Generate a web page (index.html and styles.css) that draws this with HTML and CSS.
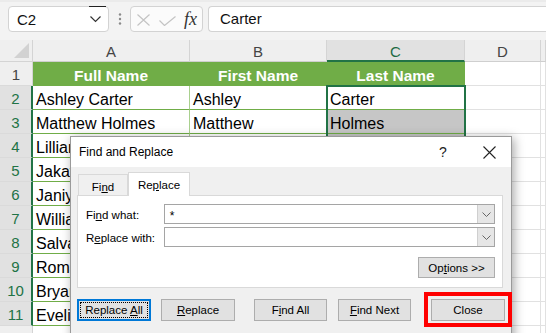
FILE: index.html
```html
<!DOCTYPE html>
<html>
<head>
<meta charset="utf-8">
<link rel="stylesheet" href="styles.css">
</head>
<body>
<div class="app">
  <div class="fbar">
    <div class="namebox"><span>C2</span><svg width="11" height="7" viewBox="0 0 11 7"><polyline points="0.5,0.5 5.5,5.5 10.5,0.5" fill="none" stroke="#333" stroke-width="1.2"/></svg></div>
    <div class="dots"><svg width="4" height="12" viewBox="0 0 4 12"><circle cx="2" cy="1.5" r="1.2" fill="#8a8a8a"/><circle cx="2" cy="6" r="1.2" fill="#8a8a8a"/><circle cx="2" cy="10.5" r="1.2" fill="#8a8a8a"/></svg></div>
    <div class="fxbox">
      <svg class="ic-x" width="13" height="12" viewBox="0 0 13 12"><path d="M0.5 0.5 L12.5 11.5 M12.5 0.5 L0.5 11.5" stroke="#c4c4c4" stroke-width="1.2" fill="none"/></svg>
      <svg class="ic-ok" width="17" height="10" viewBox="0 0 17 10"><polyline points="0.5,4.5 5.5,9.5 16.5,0.5" fill="none" stroke="#c4c4c4" stroke-width="1.2"/></svg>
      <span class="fx">fx</span>
    </div>
    <div class="finput">Carter</div>
  </div>

  <div class="sheet">
    <div class="corner"><span class="tri"></span></div>
    <div class="ch">A</div><div class="ch">B</div><div class="ch hl">C</div><div class="ch">D</div><div class="ch"></div>

    <div class="rh">1</div><div class="c th">Full Name</div><div class="c th">First Name</div><div class="c th">Last Name</div><div class="c"></div><div class="c"></div>
    <div class="rh on">2</div><div class="c tc">Ashley Carter</div><div class="c tc">Ashley</div><div class="c tc">Carter</div><div class="c"></div><div class="c"></div>
    <div class="rh on">3</div><div class="c tc">Matthew Holmes</div><div class="c tc">Matthew</div><div class="c tc sel">Holmes</div><div class="c"></div><div class="c"></div>
    <div class="rh on">4</div><div class="c tc">Lillian Moore</div><div class="c tc">Lillian</div><div class="c tc sel">Moore</div><div class="c"></div><div class="c"></div>
    <div class="rh on">5</div><div class="c tc">Jakayla Reed</div><div class="c tc">Jakayla</div><div class="c tc sel">Reed</div><div class="c"></div><div class="c"></div>
    <div class="rh on">6</div><div class="c tc">Janiyah Hunt</div><div class="c tc">Janiyah</div><div class="c tc sel">Hunt</div><div class="c"></div><div class="c"></div>
    <div class="rh on">7</div><div class="c tc">William Fox</div><div class="c tc">William</div><div class="c tc sel">Fox</div><div class="c"></div><div class="c"></div>
    <div class="rh on">8</div><div class="c tc">Salvador Diaz</div><div class="c tc">Salvador</div><div class="c tc sel">Diaz</div><div class="c"></div><div class="c"></div>
    <div class="rh on">9</div><div class="c tc">Roman Hayes</div><div class="c tc">Roman</div><div class="c tc sel">Hayes</div><div class="c"></div><div class="c"></div>
    <div class="rh on">10</div><div class="c tc">Bryan Ortiz</div><div class="c tc">Bryan</div><div class="c tc sel">Ortiz</div><div class="c"></div><div class="c"></div>
    <div class="rh on">11</div><div class="c tc">Evelin Ross</div><div class="c tc">Evelin</div><div class="c tc sel">Ross</div><div class="c"></div><div class="c"></div>
    <div class="rh"></div><div class="c"></div><div class="c"></div><div class="c"></div><div class="c"></div><div class="c"></div>
  </div>

  <div class="selbox"></div>

  <div class="dialog">
    <div class="titlebar">
      <span class="title">Find and Replace</span>
      <span class="help">?</span>
      <span class="close"><svg width="13" height="13" viewBox="0 0 13 13"><path d="M0.5 0.5 L12.5 12.5 M12.5 0.5 L0.5 12.5" stroke="#222" stroke-width="1.1" fill="none"/></svg></span>
    </div>
    <div class="dbody">
      <div class="tabs">
        <div class="tab">Fi<u>n</u>d</div>
        <div class="tab active">Re<u>p</u>lace</div>
      </div>
      <div class="panel">
        <div class="frow">
          <span class="lbl">Fi<u>n</u>d what:</span>
          <div class="combo"><span class="val">*</span><span class="drop"><svg width="9" height="5" viewBox="0 0 9 5"><polyline points="0.5,0.5 4.5,4.5 8.5,0.5" fill="none" stroke="#666" stroke-width="1"/></svg></span></div>
        </div>
        <div class="frow">
          <span class="lbl">R<u>e</u>place with:</span>
          <div class="combo"><span class="val"></span><span class="drop"><svg width="9" height="5" viewBox="0 0 9 5"><polyline points="0.5,0.5 4.5,4.5 8.5,0.5" fill="none" stroke="#666" stroke-width="1"/></svg></span></div>
        </div>
        <div class="optrow"><button class="btn opt">Op<u>t</u>ions &gt;&gt;</button></div>
      </div>
      <div class="btnrow">
        <button class="btn b-all"><span class="focus">Replace <u>A</u>ll</span></button>
        <button class="btn b-rep"><u>R</u>eplace</button>
        <button class="btn b-fall">F<u>i</u>nd All</button>
        <button class="btn b-fnext"><u>F</u>ind Next</button>
        <button class="btn b-close">Close</button>
      </div>
    </div>
  </div>

  <div class="redbox"></div>
</div>
</body>
</html>
```
FILE: styles.css
```css
html, body {
  margin: 0;
  padding: 0;
}
body {
  width: 546px;
  height: 333px;
  overflow: hidden;
  background: #fff;
  font-family: "Liberation Sans", Arial, sans-serif;
}
.app {
  position: relative;
  width: 546px;
  height: 333px;
  overflow: hidden;
}

/* formula bar */
.fbar {
  height: 40px;
  box-sizing: border-box;
  padding-top: 4px;
  background: #f3f3f3;
  border-top: 2px solid #ebebeb;
  display: flex;
  align-items: flex-start;
}
.namebox {
  margin-left: 8px;
  width: 101px;
  height: 26px;
  box-sizing: border-box;
  border: 1px solid #d3d3d3;
  border-radius: 4px;
  background: #fff;
  display: flex;
  align-items: center;
  justify-content: space-between;
  padding: 0 7px 0 8px;
  font-size: 15px;
  color: #111;
  position: relative;
}
.namebox::after {
  content: "";
  position: absolute;
  top: -1px;
  right: 2px;
  width: 17px;
  height: 1px;
  background: #222;
}
.dots {
  width: 21px;
  height: 26px;
  display: flex;
  align-items: center;
  justify-content: center;
}
.fxbox {
  width: 73px;
  height: 26px;
  box-sizing: border-box;
  border: 1px solid #d3d3d3;
  border-radius: 4px;
  background: #fbfbfb;
  display: flex;
  align-items: center;
  padding-left: 6px;
}
.ic-x { margin-top: 2px; }
.ic-ok { margin-left: 9px; margin-top: 3px; }
.fx {
  margin-left: 8px;
  font-family: "Liberation Serif", "Times New Roman", serif;
  font-style: italic;
  font-size: 18px;
  color: #333;
  line-height: 1;
}
.finput {
  margin-left: 5px;
  flex: 1;
  height: 26px;
  box-sizing: border-box;
  border: 1px solid #d3d3d3;
  border-right: none;
  border-radius: 4px 0 0 4px;
  background: #fff;
  padding-left: 11px;
  font-size: 15px;
  line-height: 24px;
  color: #111;
}

/* sheet */
.sheet {
  display: grid;
  grid-template-columns: 33px 157px 137px 138px 76px 5px;
  grid-template-rows: 22px repeat(11, 24px) 10px;
  font-size: 16px;
}
.corner {
  background: #efefef;
  border-right: 1px solid #d4d4d4;
  border-bottom: 1px solid #d4d4d4;
  position: relative;
}
.tri {
  position: absolute;
  right: 3px;
  bottom: 3px;
  width: 0;
  height: 0;
  border-left: 15px solid transparent;
  border-bottom: 15px solid #d2d2d2;
}
.ch {
  background: #efefef;
  border-right: 1px solid #d4d4d4;
  border-bottom: 1px solid #cfcfcf;
  color: #444;
  font-size: 15px;
  display: flex;
  align-items: center;
  justify-content: center;
  padding-top: 2px;
  box-sizing: border-box;
}
.ch.hl {
  background: #e1e1e1;
  color: #1e6b43;
  border-bottom: 2px solid #217346;
}
.rh {
  background: #efefef;
  border-right: 1px solid #d4d4d4;
  border-bottom: 1px solid #dadada;
  color: #444;
  font-size: 15px;
  display: flex;
  align-items: center;
  justify-content: center;
  padding-top: 2px;
  box-sizing: border-box;
}
.rh.on {
  background: #e1e1e1;
  color: #217346;
  border-right: 2px solid #217346;
}
.c {
  border-right: 1px solid #e1e1e1;
  border-bottom: 1px solid #e1e1e1;
  box-sizing: border-box;
  line-height: 24px;
  padding: 2px 0 0 3px;
  white-space: nowrap;
  overflow: hidden;
  color: #000;
}
.c.th {
  background: #70ad47;
  border-right-color: #70ad47;
  border-bottom-color: #70ad47;
  color: #fff;
  font-weight: bold;
  text-align: center;
  padding-left: 0;
  font-size: 15.5px;
}
.c.tc {
  border-right-color: #a9d08e;
  border-bottom-color: #70ad47;
}
.c.sel {
  background: #c6c6c6;
}
.selbox {
  position: absolute;
  left: 326px;
  top: 85px;
  width: 140px;
  height: 260px;
  box-sizing: border-box;
  border: 2px solid #217346;
  pointer-events: none;
}

/* dialog */
.dialog {
  position: absolute;
  left: 70px;
  top: 136px;
  width: 442px;
  height: 215px;
  box-sizing: border-box;
  border: 1px solid #9a9a9a;
  background: #f0f0f0;
  box-shadow: 2px 2px 10px rgba(0, 0, 0, 0.35);
  font-size: 11.5px;
  color: #000;
  z-index: 2;
}
.titlebar {
  height: 30px;
  background: #fff;
  display: flex;
  align-items: center;
  padding-left: 8px;
}
.title {
  flex: 1;
  font-size: 12px;
}
.help {
  width: 20px;
  text-align: center;
  font-size: 14px;
  color: #222;
}
.close {
  width: 24px;
  margin-left: 24px;
  margin-right: 10px;
  display: flex;
  justify-content: center;
}
.dbody {
  padding: 5px 0 0 6px;
}
.tabs {
  display: flex;
  align-items: flex-end;
  height: 23px;
  padding-left: 1px;
  position: relative;
  z-index: 1;
}
.tab {
  width: 50px;
  height: 21px;
  box-sizing: border-box;
  border: 1px solid #d9d9d9;
  border-bottom: none;
  background: #f0f0f0;
  display: flex;
  align-items: center;
  justify-content: center;
  padding-top: 3px;
}
.tab.active {
  width: 62px;
  height: 24px;
  margin-bottom: -1px;
  background: #fff;
  padding-top: 1px;
}
.panel {
  width: 426px;
  height: 93px;
  box-sizing: border-box;
  border: 1px solid #d9d9d9;
  background: #fff;
  padding: 8px 7px 0 8px;
}
.frow {
  display: flex;
  align-items: center;
  height: 20px;
  margin-bottom: 3px;
}
.lbl {
  width: 78px;
  padding-top: 1px;
}
.combo {
  width: 333px;
  height: 20px;
  box-sizing: border-box;
  border: 1px solid #a5a5a5;
  background: #fff;
  display: flex;
  align-items: center;
}
.val {
  flex: 1;
  padding-left: 5px;
  padding-top: 3px;
  font-size: 12px;
}
.drop {
  width: 17px;
  height: 18px;
  box-sizing: border-box;
  background: #e6e6e6;
  border-left: 1px solid #cfcfcf;
  display: flex;
  align-items: center;
  justify-content: center;
}
.optrow {
  margin-top: 10px;
  display: flex;
  justify-content: flex-end;
}
.btn {
  font-family: "Liberation Sans", Arial, sans-serif;
  font-size: 11.5px;
  color: #000;
  background: #e1e1e1;
  border: 1px solid #adadad;
  height: 22px;
  padding: 0;
  box-sizing: border-box;
  display: flex;
  align-items: center;
  justify-content: center;
}
.btn.opt {
  width: 77px;
  height: 21px;
}
.btnrow {
  margin-top: 11px;
  display: flex;
}
.b-all {
  width: 74px;
  border: 2px solid #0078d7;
}
.focus {
  display: block;
  outline: 1px dotted #000;
  width: 66px;
  height: 14px;
  line-height: 14px;
  text-align: center;
  white-space: nowrap;
}
.b-rep { width: 74px; margin-left: 10px; }
.b-fall { width: 73px; margin-left: 19px; }
.b-fnext { width: 73px; margin-left: 11px; }
.b-close { width: 74px; margin-left: 20px; }

.redbox {
  position: absolute;
  left: 424px;
  top: 292px;
  width: 88px;
  height: 35px;
  box-sizing: border-box;
  border: 4px solid #ff0000;
  z-index: 3;
}
```
